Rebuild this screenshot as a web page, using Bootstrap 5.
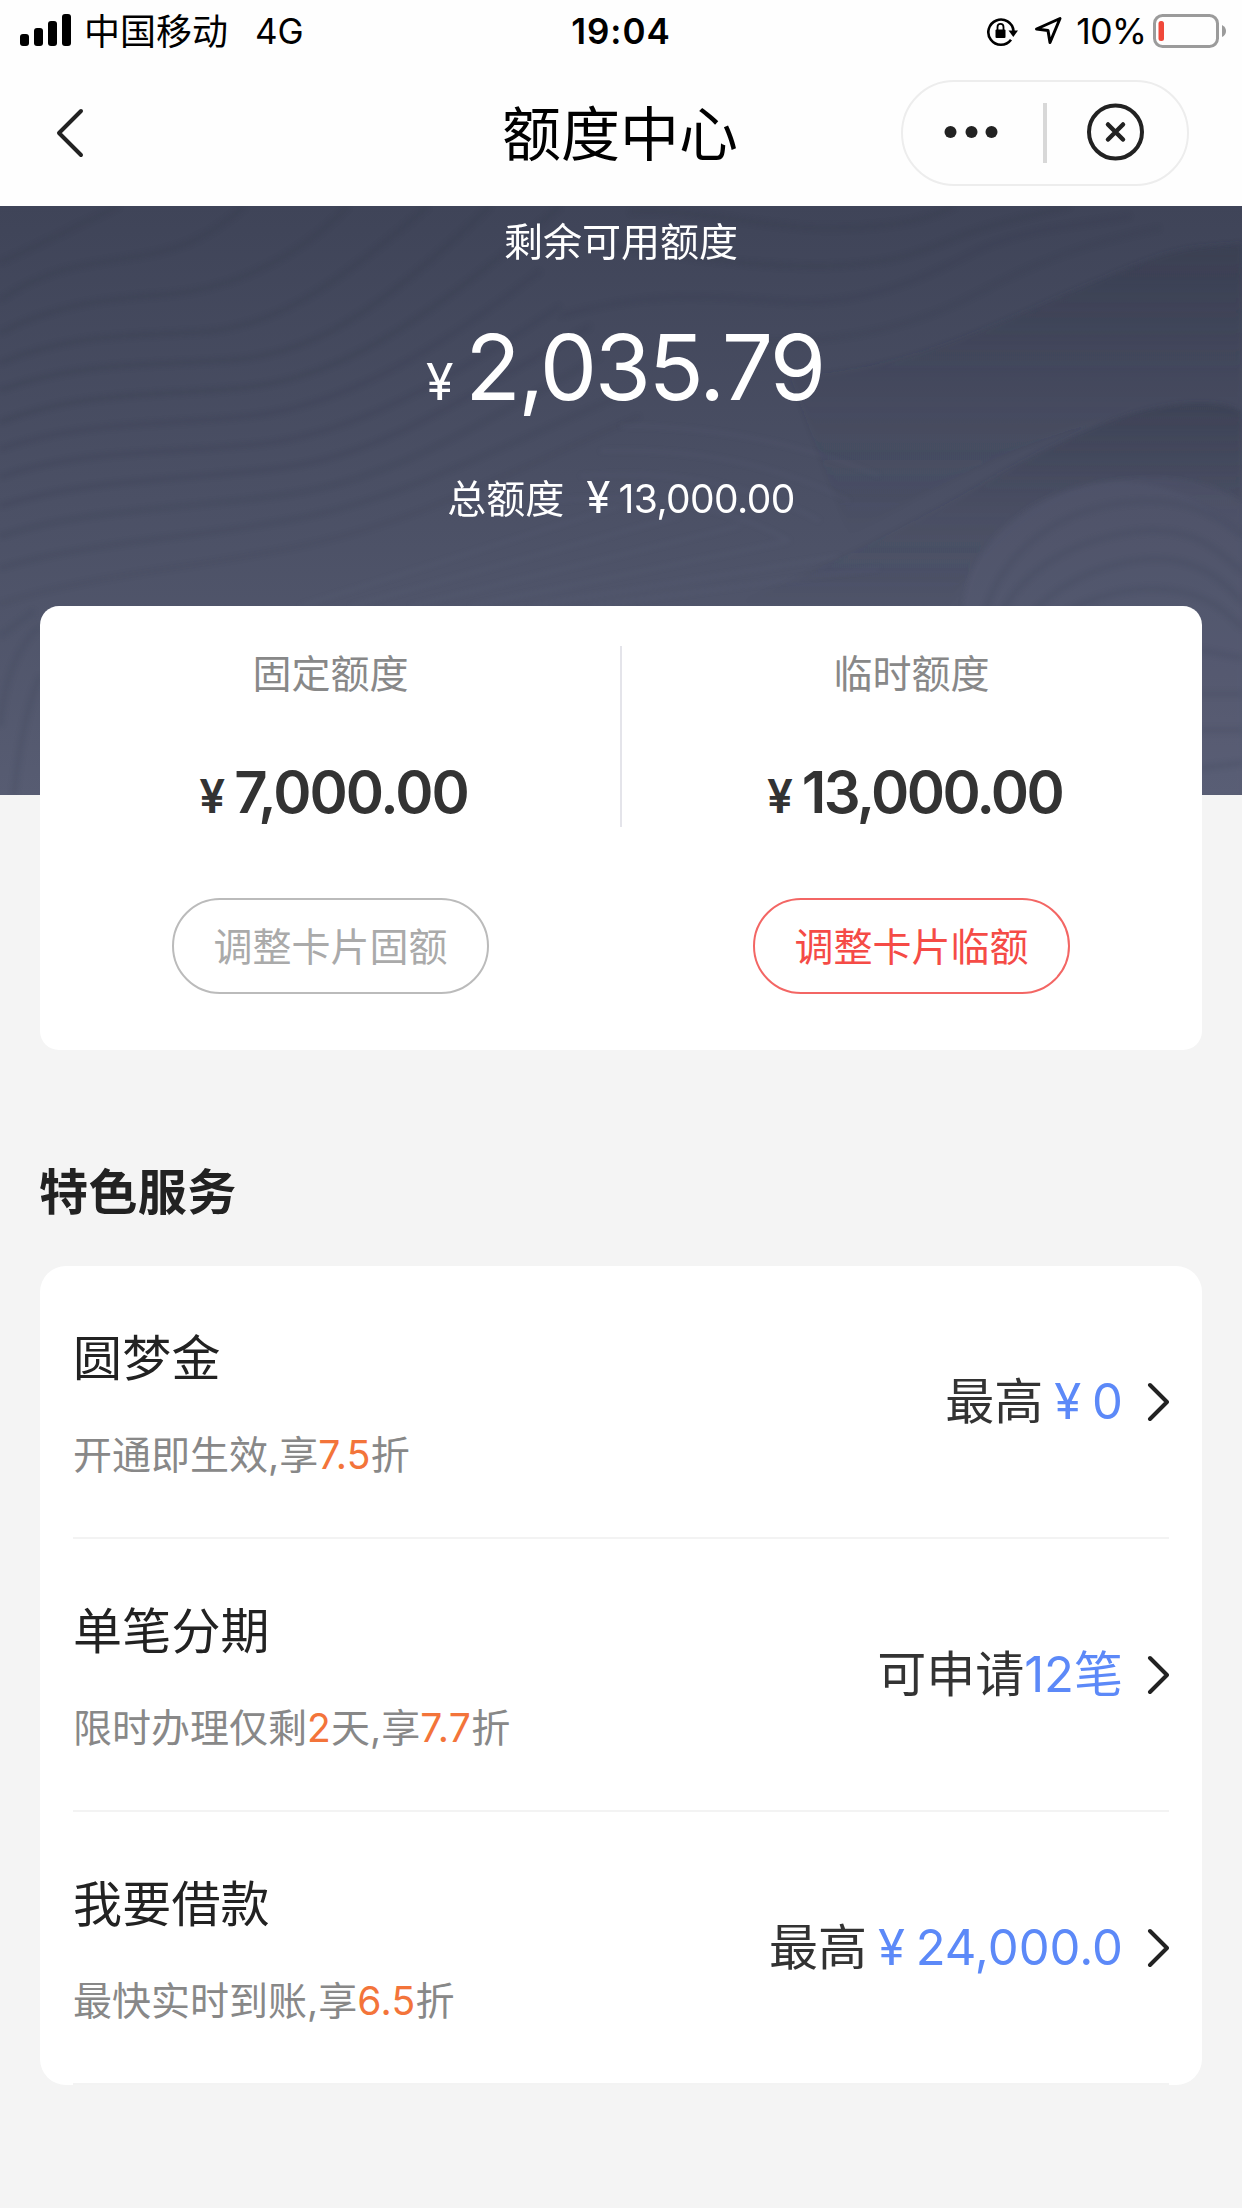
<!DOCTYPE html>
<html lang="zh-CN">
<head>
<meta charset="utf-8">
<meta name="viewport" content="width=device-width, initial-scale=1">
<title>额度中心</title>
<link href="https://cdn.jsdelivr.net/npm/bootstrap@5.3.0/dist/css/bootstrap.min.css" rel="stylesheet">
<style>
  body { background: #f4f4f4; color: #222; font-family: Inter, "Noto Sans CJK SC", sans-serif; font-size: 39px; line-height: 1; overflow-x: hidden; }
  svg { display: block; flex: none; }
  .app-head { height: 206px; background: #fefefe; color: #000; }
  .status-bar { height: 62px; padding: 0 16px 0 20px; font-size: 36px; }
  .status-side { width: 500px; }
  .carrier { margin-left: 12px; padding-top: 1px; font-size: 36px; }
  .net { margin-left: 27px; font-size: 35px; letter-spacing: -.2px; }
  .clock { font-size: 35px; font-weight: 600; letter-spacing: 1px; padding-right: 4px; }
  .pct { font-size: 36px; letter-spacing: -1px; margin: 0 7px 0 12px; }
  .title-bar { height: 144px; padding: 0 53px 2px 55px; }
  .page-title { font-size: 59px; font-weight: 400; line-height: 1; padding: 3px 4px 0 0; }
  .title-side { width: 288px; }
  .capsule { width: 288px; height: 106px; border: 2px solid #ededed; border-radius: 53px; }
  .hero { height: 589px; background: linear-gradient(#3f4458, #575c72); color: #fff; padding-top: 16px; }
  .hero-art { z-index: 0; }
  .hero-copy { position: relative; z-index: 1; }
  .lh-cap { line-height: 39px; }
  .big-amount { margin-top: 54px; height: 104px; line-height: 104px; font-weight: 400; font-size: 91px; letter-spacing: -2.4px; padding-left: 8px; }
  .big-amount .yen { font-size: 50px; margin-right: 14px; }
  .total-line { margin-top: 53px; line-height: 50px; height: 50px; }
  .total-line .yen { font-size: 44px; font-weight: 400; margin: 0 8px 0 22px; }
  .total-line .num { font-weight: 400; letter-spacing: -.6px; }
  .limit-card { margin: -190px 40px 0; height: 444px; border: 0; border-radius: 19px; position: relative; z-index: 2; top: 1px; }
  .limit-col { width: 50%; padding-top: 48px; }
  .limit-col .cap { color: #888; line-height: 39px; }
  .limit-amount { margin-top: 68px; height: 62px; line-height: 62px; font-size: 58px; font-weight: 600; color: #333; letter-spacing: -2px; padding-left: 6px; }
  .limit-amount .yen { font-size: 46px; margin-right: 11px; }
  .limit-amount .tight { letter-spacing: -2.6px; }
  .limit-rule { left: 580px; top: 40px; width: 2px; height: 181px; background: #e4e4ea; }
  .pill { --bs-btn-padding-x: 0; --bs-btn-padding-y: 0; --bs-btn-font-size: 39px; --bs-btn-line-height: 1; --bs-btn-border-width: 2px; --bs-btn-color: #aaa; --bs-btn-border-color: #bbb; width: 317px; height: 96px; margin-top: 75px; border-radius: 48px; }
  .pill-hot { --bs-btn-color: #f54b46; --bs-btn-border-color: #f36664; }
  .section-title { margin: 119px 39px 48px; font-size: 49px; line-height: 50px; font-weight: 700; color: #222; letter-spacing: .4px; }
  .service-list { margin: 0 40px; background: #fff; border-radius: 26px; padding: 0 33px; height: 819px; }
  .service-list .service { height: 273px; border: 0; border-bottom: 2px solid #f3f3f3; border-radius: 0; padding: 0; background: none; }
  .service-text { padding-top: 5px; }
  .service-name { font-size: 49px; line-height: 50px; color: #222; letter-spacing: .2px; }
  .service-note { margin-top: 51px; color: #888; line-height: 40px; }
  .service-note b { font-weight: 400; color: #f3743a; letter-spacing: .3px; }
  .service-value { font-size: 49px; line-height: 50px; color: #333; padding-top: 1px; }
  .service-value b { font-weight: 400; color: #5c89f8; }
  .service-value .money { margin-left: 11px; word-spacing: -3px; }
</style>
</head>
<body>
<header class="app-head">
  <div class="status-bar d-flex align-items-center justify-content-between">
    <div class="status-side d-flex align-items-center">
      <svg width="52" height="34" viewBox="0 0 52 34" fill="#000"><rect y="20" width="9" height="12" rx="3"/><rect x="14" y="14" width="9" height="18" rx="3"/><rect x="28" y="7" width="9" height="25" rx="3"/><rect x="42" width="9" height="32" rx="3"/></svg>
      <span class="carrier">中国移动</span><span class="net">4G</span>
    </div>
    <span class="clock">19:04</span>
    <div class="status-side d-flex align-items-center justify-content-end">
      <svg width="32" height="32" viewBox="0 0 32 32"><path d="M25 24.800A12.600 12.600 0 1 1 27.500 16" fill="none" stroke="#000" stroke-width="2.600"/><path d="M22.500 15.500h9.500l-4.700 6.500z"/><rect x="9.500" y="14.500" width="10" height="8.500" rx="1"/><path d="M11.500 15v-3a3 3.200 0 0 1 6 0v3" fill="none" stroke="#000" stroke-width="1.800"/></svg>
      <svg class="ms-3" width="30" height="30" viewBox="0 0 30 30"><path d="M2.500 13 26 2.500 16 26.500 14 14.500Z" fill="none" stroke="#000" stroke-width="3" stroke-linejoin="round"/></svg>
      <span class="pct">10%</span>
      <svg width="73" height="34" viewBox="0 0 73 34"><rect x="1.500" y="1.500" width="63" height="31" rx="8" fill="none" stroke="#9b9b9b" stroke-width="3"/><rect x="5.500" y="7" width="5.500" height="20" rx="2.500" fill="#f0483a"/><path d="M69 11q4 2 4 6t-4 6z" fill="#9b9b9b"/></svg>
    </div>
  </div>
  <div class="title-bar d-flex align-items-center justify-content-between">
    <div class="title-side"><svg width="32" height="50" viewBox="0 0 32 50"><path d="M26 3 4 25 26 47" fill="none" stroke="#222" stroke-width="4" stroke-linecap="round" stroke-linejoin="round"/></svg></div>
    <h1 class="page-title m-0">额度中心</h1>
    <div class="capsule">
      <svg width="284" height="102" viewBox="0 0 284 102"><g fill="#222"><circle cx="47.500" cy="50" r="6"/><circle cx="68.500" cy="50" r="6"/><circle cx="88.500" cy="50" r="6"/></g><path d="M142 21v60" stroke="#d8d8d8" stroke-width="4"/><circle cx="212.500" cy="50" r="26.500" fill="none" stroke="#222" stroke-width="4"/><path d="m205 42.500 15 15m0-15-15 15" stroke="#222" stroke-width="4.500" stroke-linecap="round"/></svg>
    </div>
  </div>
</header>

<section class="hero position-relative overflow-hidden text-center">
  <svg class="hero-art position-absolute top-0 start-0" width="1242" height="589" viewBox="0 0 1242 589">
    <defs>
      <linearGradient id="ridge" x1="0" y1="0" x2="0" y2="1"><stop offset="0" stop-color="#343a4c" stop-opacity=".48"/><stop offset=".45" stop-color="#343a4c" stop-opacity=".12"/><stop offset="1" stop-color="#343a4c" stop-opacity="0"/></linearGradient>
      <filter id="soft" x="-5%" y="-5%" width="110%" height="110%"><feGaussianBlur stdDeviation="2.500"/></filter>
    </defs>
    <g fill="none" stroke="#343a4c" stroke-width="4.500" opacity=".28" filter="url(#soft)">
      <path d="M0 56C30 44 80 18 119 0"/>
      <path d="M0 94C50 60 90 58 140 50S215 25 245 0"/>
      <path d="M0 127C60 95 120 92 170 88S290 60 348 0"/>
      <path d="M0 157C70 128 130 130 200 126S330 85 428 0"/>
      <path d="M0 184C80 155 150 160 230 154S375 110 490 0"/>
      <path d="M0 216C80 185 160 190 240 182S400 140 560 0"/>
      <path d="M0 243C80 215 160 220 250 210S430 150 540 65" opacity=".8"/>
      <path d="M0 271C80 243 170 248 260 238S440 180 560 100" opacity=".8"/>
      <path d="M0 300C90 272 180 275 280 262S450 200 590 120" opacity=".8"/>
      <path d="M0 330C90 302 190 303 290 288S470 225 600 150" opacity=".7"/>
      <path d="M0 362C90 335 200 332 300 312S480 250 620 190" opacity=".6"/>
      <path d="M0 398C90 368 200 362 310 338S500 270 640 210" opacity=".4"/>
      <path d="M630 6C700 2 760 22 830 22S930 12 955 0"/>
      <path d="M600 40C680 50 760 62 830 60S930 42 960 30 1040 8 1070 0"/>
      <path d="M560 110C660 82 720 92 790 96S920 74 970 48 1080 20 1130 10" opacity=".8"/>
      <path d="M760 135C850 138 920 118 980 86S1090 36 1160 22" opacity=".6"/>
    </g>
    <g filter="url(#soft)">
      <path d="M790 170C900 166 980 125 1076 84S1175 42 1242 38V210C1120 190 1000 240 850 330Z" fill="url(#ridge)"/>
      <path d="M740 396C850 350 910 318 966 287S1090 215 1156 202 1242 206 1242 206V330C1140 230 1010 280 950 400Z" fill="url(#ridge)"/>
      <path d="M962 420C960 330 1040 282 1110 274S1210 276 1242 296V589H962Z" fill="#6a7088" opacity=".13"/>
    </g>
    <g fill="none" stroke="#41475b" stroke-width="5" opacity=".26" filter="url(#soft)">
      <path d="M984 410C1000 350 1050 310 1110 299S1210 302 1242 330"/>
      <path d="M1000 410C1020 370 1060 340 1120 328S1210 335 1242 366"/>
      <path d="M1030 410C1050 385 1090 360 1140 354S1220 370 1242 396"/>
      <path d="M1060 410C1090 390 1130 380 1170 384S1230 410 1242 422"/>
      <path d="M1200 444l42 8M1200 488h42M1200 524h42M1200 562l42-5M0 520Q6 450 40 420M14 589Q22 510 40 470M0 430 34 405"/>
    </g>
    <g fill="none" stroke="#6f7590" stroke-width="4" opacity=".1" filter="url(#soft)">
      <path d="M300 400 620 300M350 400 680 310M410 400 740 320M470 400 790 335M530 400 840 350M590 400 880 362M620 220Q760 220 880 270M600 245Q740 240 850 295M580 270Q720 260 820 315M550 295Q690 280 790 335"/>
    </g>
  </svg>
  <div class="hero-copy">
    <div class="lh-cap">剩余可用额度</div>
    <div class="big-amount d-flex justify-content-center align-items-baseline"><span class="yen">¥</span><span>2,035.79</span></div>
    <div class="total-line d-flex justify-content-center align-items-baseline"><span>总额度</span><span class="yen">¥</span><span class="num">13,000.00</span></div>
  </div>
</section>

<main>
  <section class="card limit-card d-flex flex-row text-center">
    <div class="limit-col">
      <div class="cap">固定额度</div>
      <div class="limit-amount d-flex justify-content-center align-items-baseline"><span class="yen">¥</span><span>7,000.00</span></div>
      <button type="button" class="btn pill">调整卡片固额</button>
    </div>
    <div class="limit-rule position-absolute"></div>
    <div class="limit-col">
      <div class="cap">临时额度</div>
      <div class="limit-amount d-flex justify-content-center align-items-baseline"><span class="yen">¥</span><span class="tight">13,000.00</span></div>
      <button type="button" class="btn pill pill-hot">调整卡片临额</button>
    </div>
  </section>

  <h2 class="section-title">特色服务</h2>
  <div class="list-group service-list">
    <div class="list-group-item service d-flex align-items-center justify-content-between">
      <div class="service-text"><div class="service-name">圆梦金</div><div class="service-note">开通即生效,享<b>7.5</b>折</div></div>
      <div class="service-value d-flex align-items-center"><span>最高<b class="money">¥ 0</b></span><svg width="46" height="40" viewBox="4 0 46 40"><path d="M31 3 48 20 31 37" fill="none" stroke="#222" stroke-width="4" stroke-linecap="round" stroke-linejoin="round"/></svg></div>
    </div>
    <div class="list-group-item service d-flex align-items-center justify-content-between">
      <div class="service-text"><div class="service-name">单笔分期</div><div class="service-note">限时办理仅剩<b>2</b>天,享<b>7.7</b>折</div></div>
      <div class="service-value d-flex align-items-center"><span>可申请<b>12笔</b></span><svg width="46" height="40" viewBox="4 0 46 40"><path d="M31 3 48 20 31 37" fill="none" stroke="#222" stroke-width="4" stroke-linecap="round" stroke-linejoin="round"/></svg></div>
    </div>
    <div class="list-group-item service d-flex align-items-center justify-content-between">
      <div class="service-text"><div class="service-name">我要借款</div><div class="service-note">最快实时到账,享<b>6.5</b>折</div></div>
      <div class="service-value d-flex align-items-center"><span>最高<b class="money">¥ 24,000.0</b></span><svg width="46" height="40" viewBox="4 0 46 40"><path d="M31 3 48 20 31 37" fill="none" stroke="#222" stroke-width="4" stroke-linecap="round" stroke-linejoin="round"/></svg></div>
    </div>
  </div>
</main>
<script src="https://cdn.jsdelivr.net/npm/bootstrap@5.3.0/dist/js/bootstrap.bundle.min.js"></script>
</body>
</html>
